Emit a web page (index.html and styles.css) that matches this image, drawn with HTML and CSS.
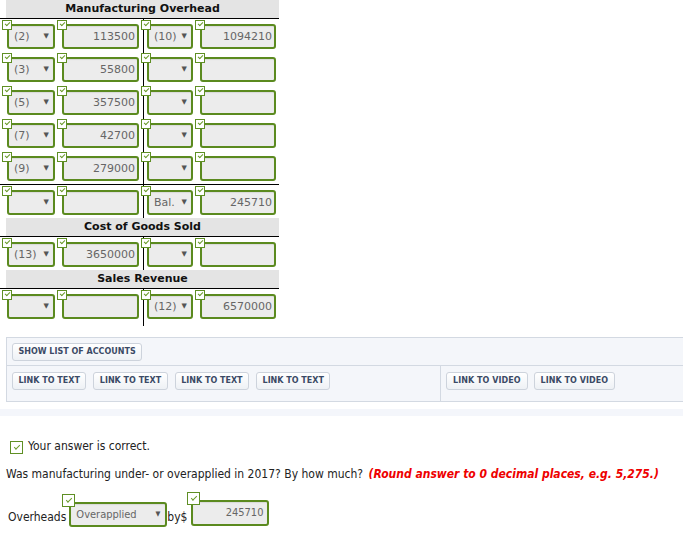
FILE: index.html
```html
<!DOCTYPE html>
<html>
<head>
    <title>Manufacturing Overhead</title>
    <link rel="stylesheet" href="styles.css">
</head>
<body>
    <div class="t-account">
        <div class="t-head">Manufacturing Overhead</div>
        <div class="t-row">
            <div class="t-side left">
                <div class="cell c1"><span class="chk"></span><div class="box sel">(2)<span class="arr">&#9660;</span></div></div>
                <div class="cell c2"><span class="chk"></span><div class="box amt">113500</div></div>
            </div>
            <div class="t-side right">
                <div class="cell c3"><span class="chk"></span><div class="box sel">(10)<span class="arr">&#9660;</span></div></div>
                <div class="cell c4"><span class="chk"></span><div class="box amt">1094210</div></div>
            </div>
        </div>
        <div class="t-row">
            <div class="t-side left">
                <div class="cell c1"><span class="chk"></span><div class="box sel">(3)<span class="arr">&#9660;</span></div></div>
                <div class="cell c2"><span class="chk"></span><div class="box amt">55800</div></div>
            </div>
            <div class="t-side right">
                <div class="cell c3"><span class="chk"></span><div class="box sel"><span class="arr">&#9660;</span></div></div>
                <div class="cell c4"><span class="chk"></span><div class="box amt"></div></div>
            </div>
        </div>
        <div class="t-row">
            <div class="t-side left">
                <div class="cell c1"><span class="chk"></span><div class="box sel">(5)<span class="arr">&#9660;</span></div></div>
                <div class="cell c2"><span class="chk"></span><div class="box amt">357500</div></div>
            </div>
            <div class="t-side right">
                <div class="cell c3"><span class="chk"></span><div class="box sel"><span class="arr">&#9660;</span></div></div>
                <div class="cell c4"><span class="chk"></span><div class="box amt"></div></div>
            </div>
        </div>
        <div class="t-row">
            <div class="t-side left">
                <div class="cell c1"><span class="chk"></span><div class="box sel">(7)<span class="arr">&#9660;</span></div></div>
                <div class="cell c2"><span class="chk"></span><div class="box amt">42700</div></div>
            </div>
            <div class="t-side right">
                <div class="cell c3"><span class="chk"></span><div class="box sel"><span class="arr">&#9660;</span></div></div>
                <div class="cell c4"><span class="chk"></span><div class="box amt"></div></div>
            </div>
        </div>
        <div class="t-row">
            <div class="t-side left">
                <div class="cell c1"><span class="chk"></span><div class="box sel">(9)<span class="arr">&#9660;</span></div></div>
                <div class="cell c2"><span class="chk"></span><div class="box amt">279000</div></div>
            </div>
            <div class="t-side right">
                <div class="cell c3"><span class="chk"></span><div class="box sel"><span class="arr">&#9660;</span></div></div>
                <div class="cell c4"><span class="chk"></span><div class="box amt"></div></div>
            </div>
        </div>
        <div class="t-row total">
            <div class="t-side left">
                <div class="cell c1"><span class="chk"></span><div class="box sel"><span class="arr">&#9660;</span></div></div>
                <div class="cell c2"><span class="chk"></span><div class="box amt"></div></div>
            </div>
            <div class="t-side right">
                <div class="cell c3"><span class="chk"></span><div class="box sel">Bal.<span class="arr">&#9660;</span></div></div>
                <div class="cell c4"><span class="chk"></span><div class="box amt">245710</div></div>
            </div>
        </div>

        <div class="t-head">Cost of Goods Sold</div>
        <div class="t-row">
            <div class="t-side left">
                <div class="cell c1"><span class="chk"></span><div class="box sel">(13)<span class="arr">&#9660;</span></div></div>
                <div class="cell c2"><span class="chk"></span><div class="box amt">3650000</div></div>
            </div>
            <div class="t-side right">
                <div class="cell c3"><span class="chk"></span><div class="box sel"><span class="arr">&#9660;</span></div></div>
                <div class="cell c4"><span class="chk"></span><div class="box amt"></div></div>
            </div>
        </div>

        <div class="t-head">Sales Revenue</div>
        <div class="t-row last">
            <div class="t-side left">
                <div class="cell c1"><span class="chk"></span><div class="box sel"><span class="arr">&#9660;</span></div></div>
                <div class="cell c2"><span class="chk"></span><div class="box amt"></div></div>
            </div>
            <div class="t-side right">
                <div class="cell c3"><span class="chk"></span><div class="box sel">(12)<span class="arr">&#9660;</span></div></div>
                <div class="cell c4"><span class="chk"></span><div class="box amt">6570000</div></div>
            </div>
        </div>
    </div>

    <div class="links-panel">
        <div class="panel-row">
            <span class="btn">Show List of Accounts</span>
        </div>
        <div class="panel-row split">
            <div class="panel-cell text-links">
                <span class="btn">Link to Text</span>
                <span class="btn">Link to Text</span>
                <span class="btn">Link to Text</span>
                <span class="btn">Link to Text</span>
            </div>
            <div class="panel-cell video-links">
                <span class="btn">Link to Video</span>
                <span class="btn">Link to Video</span>
            </div>
        </div>
    </div>

    <div class="band"></div>

    <div class="answer">
        <p class="correct"><span class="chk big"></span>Your answer is correct.</p>
        <p class="question">Was manufacturing under- or overapplied in 2017? By how much? <em class="hint">(Round answer to 0 decimal places, e.g. 5,275.)</em></p>
        <div class="final-row">
            <span class="label">Overheads</span>
            <div class="cell c-over"><span class="chk big"></span><div class="box sel">Overapplied<span class="arr">&#9660;</span></div></div>
            <span class="label">by$</span>
            <div class="cell c-by"><span class="chk big"></span><div class="box amt">245710</div></div>
        </div>
    </div>
</body>
</html>
```

FILE: styles.css
```css
body {
    margin: 0;
    font-family: "DejaVu Sans", Verdana, sans-serif;
    background-color: #fff;
    overflow: hidden;
}

/* T accounts */
.t-account {
    width: 279px;
}

.t-head {
    margin-left: 6px;
    height: 18px;
    line-height: 18px;
    background-color: #e4e4e4;
    text-align: center;
    font-size: 11px;
    font-weight: bold;
    color: #111;
    position: relative;
}

.t-head::after {
    content: "";
    position: absolute;
    left: -6px;
    right: 0;
    bottom: -1px;
    height: 1px;
    background: #000;
}

.t-head + .t-row {
    margin-top: 1px;
}

.t-row {
    display: flex;
    height: 33px;
}

.t-row.total {
    border-top: 1px solid #000;
}

.t-row.last {
    height: 37px;
}

.t-side {
    display: flex;
    box-sizing: border-box;
}

.t-side.left {
    width: 143px;
    padding-left: 2px;
}

.t-side.right {
    border-left: 1px solid #000;
}

.cell {
    position: relative;
    padding-top: 5px;
    box-sizing: border-box;
}

.c1 { width: 55px; }
.c2 { width: 82px; }
.c3 { width: 51px; }
.c4 { width: 81px; }

.c1 .box, .c2 .box, .c4 .box { margin-left: 5px; }
.c3 .box { margin-left: 3px; }
.c3 .chk { left: -3px; }

.c1 .box { width: 48px; }
.c2 .box { width: 77px; }
.c3 .box { width: 46px; }
.c4 .box { width: 76px; }

/* small check badge */
.chk {
    position: absolute;
    top: 1px;
    left: 0;
    width: 10px;
    height: 10px;
    box-sizing: border-box;
    background: #fff;
    border: 1px solid #5f8f24;
    z-index: 1;
}

.chk::after {
    content: "";
    position: absolute;
    left: 2px;
    top: 1px;
    width: 4px;
    height: 2px;
    border-left: 1px solid #6a9a2a;
    border-bottom: 1px solid #6a9a2a;
    transform: rotate(-45deg);
}

.chk.big {
    width: 13px;
    height: 13px;
}

.chk.big::after {
    left: 3px;
    top: 3px;
    width: 5px;
    height: 2px;
}

.box {
    height: 25px;
    line-height: 21px;
    box-sizing: border-box;
    border: 2px solid #5b8a1f;
    border-radius: 3px;
    background-color: #ececec;
    box-shadow: inset 0 1px 1px rgba(0, 0, 0, 0.08);
    font-size: 11px;
    color: #666;
}

.box.amt {
    text-align: right;
    padding-right: 2px;
}

.box.sel {
    display: flex;
    justify-content: space-between;
    padding: 0 4px 0 5px;
}

.arr {
    margin-left: auto;
    font-size: 7px;
    color: #555;
}

/* links panel */
.links-panel {
    margin: 11px -10px 0 6px;
    background-color: #f4f6fa;
    border: 1px solid #d3d9e2;
}

.panel-row {
    display: flex;
    padding: 5px 5px 4px;
    height: 27px;
    box-sizing: border-box;
}

.panel-row.split {
    padding: 0;
    height: 36px;
    border-top: 1px solid #d3d9e2;
}

.panel-cell {
    display: flex;
    gap: 7px;
    padding: 6px 5px 0;
}

.text-links {
    width: 434px;
    box-sizing: border-box;
    border-right: 1px solid #d3d9e2;
}

.video-links {
    gap: 6px;
}

.btn {
    display: inline-block;
    height: 18px;
    line-height: 16px;
    box-sizing: border-box;
    padding: 0 5.5px;
    border: 1px solid #cdd3dc;
    border-radius: 3px;
    background: linear-gradient(#ffffff, #eef1f5);
    font-size: 8px;
    font-weight: bold;
    text-transform: uppercase;
    color: #3b4a66;
}

.video-links .btn {
    padding: 0 6px;
    letter-spacing: 0.05px;
}

.band {
    margin-top: 7px;
    height: 7px;
    background-color: #f4f6fb;
}

/* answer area */
.answer {
    padding-left: 6px;
    font-family: "DejaVu Sans Condensed", "Liberation Sans", sans-serif;
    font-size: 12px;
    color: #222;
}

.correct {
    display: flex;
    align-items: center;
    gap: 5px;
    margin: 23px 0 0 4px;
}

.correct .chk {
    display: inline-block;
    position: relative;
}

.question {
    margin: 14px 0 0;
    white-space: nowrap;
}

.hint {
    color: #e00;
    font-weight: bold;
    margin-left: 2px;
}

.final-row {
    display: flex;
    align-items: flex-end;
    margin-top: 10px;
    padding-left: 2px;
}

.final-row .label {
    padding-bottom: 3px;
}

.final-row .cell {
    padding-top: 9px;
}

.final-row .chk {
    top: 1px;
}

.c-over .box {
    width: 98px;
    margin-left: 3px;
    padding: 0 5px;
}

.c-over .chk {
    left: -4px;
}

.c-by .box {
    width: 78px;
    height: 26px;
    margin: 0 0 1px 4px;
    padding-right: 4px;
}
```
